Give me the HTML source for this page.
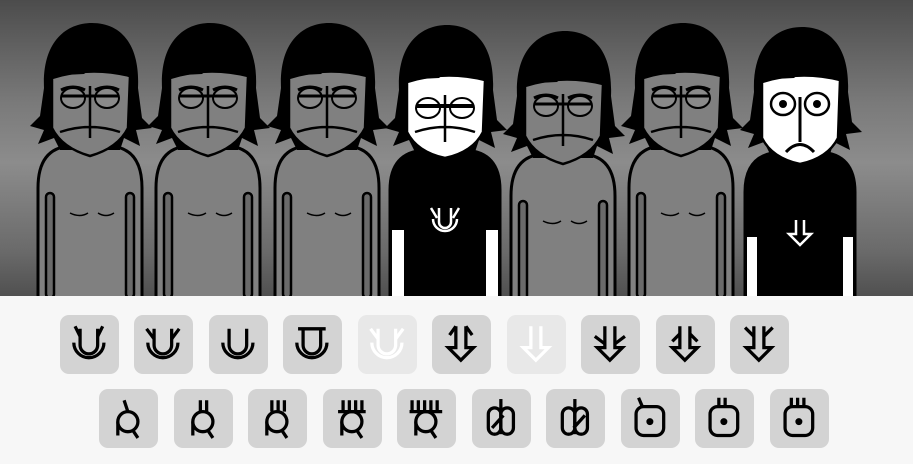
<!DOCTYPE html>
<html><head><meta charset="utf-8"><style>
html,body{margin:0;padding:0;width:913px;height:464px;overflow:hidden;background:#f7f7f7;font-family:"Liberation Sans",sans-serif}
#stage{position:absolute;left:0;top:0;width:913px;height:296px;background:linear-gradient(180deg,#4c4c4c 0%,#7a7a7a 35%,#8c8c8c 55%,#6a6a6a 85%,#505050 100%)}
.b{position:absolute;width:59px;height:59px;border-radius:9px;background:#d3d3d3}
.b.off{background:#e8e8e8}
.b svg{position:absolute;left:0;top:0}
</style></head><body>
<div id="stage">
<svg width="913" height="296" viewBox="0 0 913 296">
<g id="c1" transform="translate(90,28)">
 <path d="M-52 270 V160 Q-52 120 -20 118 H20 Q52 120 52 160 V270" fill="#808080" stroke="#000" stroke-width="3"/>
 <rect x="-44" y="165" width="8" height="105" rx="4" fill="#6a6a6a" stroke="#000" stroke-width="2.5"/>
 <rect x="36" y="165" width="8" height="105" rx="4" fill="#6a6a6a" stroke="#000" stroke-width="2.5"/>
 <path d="M-46 60 C-48 15 -25 -5 2 -5 C30 -5 50 15 48 60 L52 90 L62 100 L46 102 L50 118 L34 110 L30 122 L-30 122 L-36 110 L-52 116 L-46 102 L-60 98 L-50 88 Z" fill="#000"/>
 <path d="M-38 50 Q0 38 40 48 L38 100 Q28 120 0 128 Q-28 120 -38 100 Z" fill="#808080" stroke="#000" stroke-width="2.5"/>
 <path d="M-46 48 Q-20 20 22 24 L-6 46 Z" fill="#000"/>
 <ellipse cx="-17" cy="70" rx="12" ry="10" fill="#8a8a8a" stroke="#000" stroke-width="2"/>
 <ellipse cx="17" cy="70" rx="12" ry="10" fill="#8a8a8a" stroke="#000" stroke-width="2"/>
 <path d="M-29 68 H29 M-29 62 Q-17 56 -5 62 M5 62 Q17 56 29 62" stroke="#000" stroke-width="3" fill="none"/>
 <path d="M0 58 V110 M-30 104 Q0 94 30 104" stroke="#000" stroke-width="2.5" fill="none"/>
 <path d="M-20 185 Q-10 190 -2 185 M8 185 Q16 190 24 185" stroke="#000" stroke-width="1.5" fill="none"/>
</g>
<use href="#c1" x="118" y="0"/>
<use href="#c1" x="237" y="0"/>
<use href="#c1" x="473" y="8"/>
<use href="#c1" x="591" y="0"/>
<g transform="translate(445,40)">
 <path d="M-55 260 V150 Q-55 112 -20 110 H20 Q55 112 55 150 V260" fill="#000" stroke="#000" stroke-width="3"/>
 <rect x="-53" y="190" width="12" height="70" fill="#fff"/>
 <rect x="41" y="190" width="12" height="70" fill="#fff"/>
 <path d="M-46 50 C-48 5 -25 -15 2 -15 C30 -15 50 5 48 50 L52 80 L62 90 L46 92 L50 108 L34 100 L30 112 L-30 112 L-36 100 L-52 106 L-46 92 L-60 88 L-50 78 Z" fill="#000"/>
 <path d="M-22 100 Q0 135 22 100 Z" fill="#fff"/>
 <path d="M-38 42 Q0 30 40 40 L38 92 Q28 112 0 118 Q-28 112 -38 92 Z" fill="#fff" stroke="#000" stroke-width="2.5"/>
 <path d="M-46 40 Q-20 12 22 16 L-6 38 Z" fill="#000"/>
 <ellipse cx="-17" cy="68" rx="12" ry="10" fill="#fff" stroke="#000" stroke-width="2"/>
 <ellipse cx="17" cy="68" rx="12" ry="10" fill="#fff" stroke="#000" stroke-width="2"/>
 <path d="M-29 66 H29" stroke="#000" stroke-width="4"/>
 <path d="M0 55 V102 M-30 92 Q0 82 30 92" stroke="#000" stroke-width="2.5" fill="none"/>
 <path d="M-6 168 V182 A6 6 0 0 0 6 182 V168 M-12 179 A12 12 0 0 0 12 179 M-14 168 L-8 178 M14 168 L8 178" stroke="#fff" stroke-width="2.5" fill="none"/>
</g>
<g transform="translate(800,42)">
 <path d="M-55 260 V150 Q-55 112 -20 110 H20 Q55 112 55 150 V260" fill="#000" stroke="#000" stroke-width="3"/>
 <rect x="-53" y="195" width="10" height="65" fill="#fff"/>
 <rect x="43" y="195" width="10" height="65" fill="#fff"/>
 <path d="M-46 50 C-48 5 -25 -15 2 -15 C30 -15 50 5 48 50 L52 80 L62 90 L46 92 L50 108 L34 100 L30 112 L-30 112 L-36 100 L-52 106 L-46 92 L-60 88 L-50 78 Z" fill="#000"/>
 <path d="M-22 100 Q0 135 22 100 Z" fill="#fff"/>
 <path d="M-38 40 Q0 28 40 38 L38 96 Q28 116 0 122 Q-28 116 -38 96 Z" fill="#fff" stroke="#000" stroke-width="2.5"/>
 <path d="M-46 38 Q-20 10 22 14 L-6 36 Z" fill="#000"/>
 <ellipse cx="-17" cy="62" rx="12" ry="11" fill="#fff" stroke="#000" stroke-width="2.5"/>
 <ellipse cx="17" cy="62" rx="12" ry="11" fill="#fff" stroke="#000" stroke-width="2.5"/>
 <circle cx="-17" cy="62" r="4" fill="#000"/><circle cx="17" cy="62" r="4" fill="#000"/>
 <path d="M0 55 V100 M-14 110 Q0 95 14 110" stroke="#000" stroke-width="3" fill="none"/>
 <path d="M-4 178 V192 L-11 192 L0 203 L11 192 L4 192 V178" stroke="#fff" stroke-width="2.5" fill="none"/>
</g>
</svg>
</div>

<svg width="0" height="0" style="position:absolute"><defs>
<g id="u" fill="none" stroke-width="2.6"><path d="M22 18 V31 A7 7 0 0 0 36 31 V18"/><path d="M17 29 A12 12 0 0 0 41 29"/></g>
<g id="ar" fill="none" stroke-width="2.6"><path d="M25 16 V33 L19 33 L29 43 L39 33 L33 33 V16"/></g>
<g id="q" fill="none" stroke-width="2.6"><circle cx="29" cy="33" r="8"/><path d="M21 33 V44 M33 40 L37 46"/></g>
<g id="sq" fill="none" stroke-width="2.6"><rect x="18" y="21" width="22" height="23" rx="6"/><circle cx="29" cy="33" r="1.5" fill="#000"/></g>
<g id="lg" fill="none" stroke-width="2.6"><rect x="19" y="22" width="10" height="21" rx="5"/><rect x="29" y="22" width="10" height="21" rx="5"/><path d="M29 15 V43"/></g>
</defs></svg>

<div class="b" style="left:60px;top:315px"><svg width="59" height="59" viewBox="6 7 47 47"><use href="#u" stroke="#000"/><path d="M22 24 L18 16 M36 24 L40 16" stroke="#000" stroke-width="2.6"/></svg></div>
<div class="b" style="left:134px;top:315px"><svg width="59" height="59" viewBox="6 7 47 47"><use href="#u" stroke="#000"/><path d="M22 26 L16 18 M36 26 L42 18" stroke="#000" stroke-width="2.6"/></svg></div>
<div class="b" style="left:209px;top:315px"><svg width="59" height="59" viewBox="6 7 47 47"><use href="#u" stroke="#000"/></svg></div>
<div class="b" style="left:283px;top:315px"><svg width="59" height="59" viewBox="6 7 47 47"><use href="#u" stroke="#000"/><path d="M18 18 H40" stroke="#000" stroke-width="2.6"/></svg></div>
<div class="b off" style="left:358px;top:315px"><svg width="59" height="59" viewBox="6 7 47 47"><use href="#u" stroke="#fff"/><path d="M22 26 L16 18 M36 26 L42 18" stroke="#fff" stroke-width="2.6"/></svg></div>
<div class="b" style="left:432px;top:315px"><svg width="59" height="59" viewBox="6 7 47 47"><use href="#ar" stroke="#000"/><path d="M25 16 L20 23 M33 16 L38 23" stroke="#000" stroke-width="2.6"/></svg></div>
<div class="b off" style="left:507px;top:315px"><svg width="59" height="59" viewBox="6 7 47 47"><use href="#ar" stroke="#fff"/></svg></div>
<div class="b" style="left:581px;top:315px"><svg width="59" height="59" viewBox="6 7 47 47"><use href="#ar" stroke="#000"/><path d="M25 30 L17 24 M33 30 L41 24" stroke="#000" stroke-width="2.6"/></svg></div>
<div class="b" style="left:656px;top:315px"><svg width="59" height="59" viewBox="6 7 47 47"><use href="#ar" stroke="#000"/><path d="M25 22 L19 28 M33 22 L39 28" stroke="#000" stroke-width="2.6"/></svg></div>
<div class="b" style="left:730px;top:315px"><svg width="59" height="59" viewBox="6 7 47 47"><use href="#ar" stroke="#000"/><path d="M25 24 L18 17 M33 24 L40 17" stroke="#000" stroke-width="2.6"/></svg></div>

<div class="b" style="left:99px;top:389px"><svg width="59" height="59" viewBox="6 7 47 47"><use href="#q" stroke="#000"/><path d="M29 25 L26 16" stroke="#000" stroke-width="2.6"/></svg></div>
<div class="b" style="left:174px;top:389px"><svg width="59" height="59" viewBox="6 7 47 47"><use href="#q" stroke="#000"/><path d="M27 25 V16 M32 25 V16" stroke="#000" stroke-width="2.6"/></svg></div>
<div class="b" style="left:248px;top:389px"><svg width="59" height="59" viewBox="6 7 47 47"><use href="#q" stroke="#000"/><path d="M25 25 V16 M30 25 V16 M35 25 V16" stroke="#000" stroke-width="2.6"/></svg></div>
<div class="b" style="left:323px;top:389px"><svg width="59" height="59" viewBox="6 7 47 47"><use href="#q" stroke="#000"/><path d="M18 25 H40 M22 25 V16 M27 25 V16 M32 25 V16 M37 25 V16" stroke="#000" stroke-width="2.6"/></svg></div>
<div class="b" style="left:397px;top:389px"><svg width="59" height="59" viewBox="6 7 47 47"><use href="#q" stroke="#000"/><path d="M16 25 H42 M18 25 V16 M23 25 V16 M28 25 V16 M33 25 V16 M38 25 V16" stroke="#000" stroke-width="2.6"/></svg></div>
<div class="b" style="left:472px;top:389px"><svg width="59" height="59" viewBox="6 7 47 47"><use href="#lg" stroke="#000"/><path d="M22 38 L31 28" stroke="#000" stroke-width="2.6"/></svg></div>
<div class="b" style="left:546px;top:389px"><svg width="59" height="59" viewBox="6 7 47 47"><use href="#lg" stroke="#000"/><path d="M28 38 L37 28" stroke="#000" stroke-width="2.6"/></svg></div>
<div class="b" style="left:621px;top:389px"><svg width="59" height="59" viewBox="6 7 47 47"><use href="#sq" stroke="#000"/><path d="M23 21 L20 14" stroke="#000" stroke-width="2.6"/></svg></div>
<div class="b" style="left:695px;top:389px"><svg width="59" height="59" viewBox="6 7 47 47"><use href="#sq" stroke="#000"/><path d="M25 21 V14 M30 21 V14" stroke="#000" stroke-width="2.6"/></svg></div>
<div class="b" style="left:770px;top:389px"><svg width="59" height="59" viewBox="6 7 47 47"><use href="#sq" stroke="#000"/><path d="M23 21 V14 M28 21 V14 M33 21 V14" stroke="#000" stroke-width="2.6"/></svg></div>
</body></html>
